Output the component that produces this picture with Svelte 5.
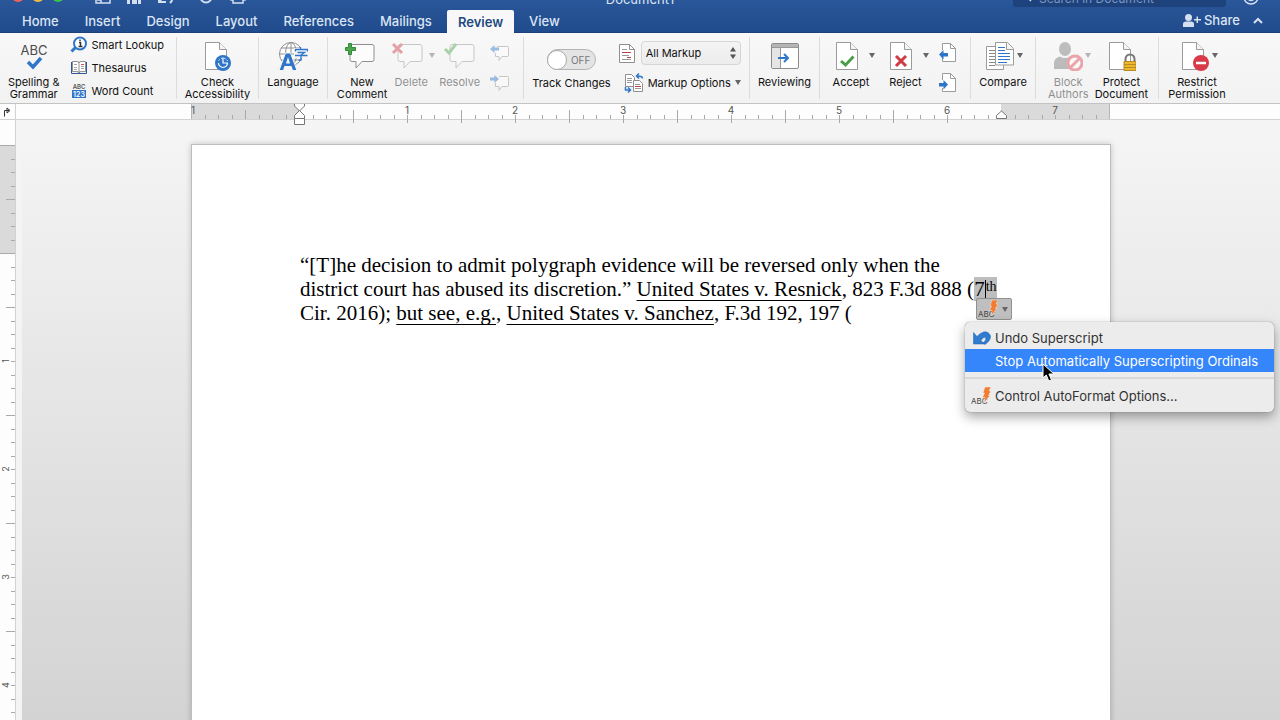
<script lang="ts">
	const tabs = ['Home', 'Insert', 'Design', 'Layout', 'References', 'Mailings', 'Review', 'View'];
	let activeTab = $state('Review');
	let search = $state('');
	let tracking = $state(false);
	let markup = $state('All Markup');

	// one inch on the rulers, with a tick every eighth
	const inch = 108;
	const hTicks = Array.from({ length: 67 }, (_, i) => i + 1);
	const vTicks = Array.from({ length: 87 }, (_, i) => i + 1);
	const hNumbers = [1, 2, 3, 4, 5, 6, 7];
	const vNumbers = [1, 2, 3, 4, 5, 6, 7, 8, 9];
</script>

{#snippet sheet()}
	<path d="M3.5 1.5h14l7 7v20h-21z" fill="#fff" stroke="#9b9b9b" />
	<path d="M17.5 1.5v7h7" fill="#f4f4f4" stroke="#9b9b9b" />
{/snippet}

{#snippet bubble()}
	<path d="M7 3.500h20a2 2 0 0 1 2 2v13a2 2 0 0 1-2 2H17l-6 6.500v-6.500H7a2 2 0 0 1-2-2v-13a2 2 0 0 1 2-2z" fill="#fcfcfc" stroke="#8f8f8f" />
{/snippet}

{#snippet caret()}
	<svg width="6" height="5" viewBox="0 0 6 5"><path d="M0 0h6L3 5z" fill="#666" /></svg>
{/snippet}

{#snippet abcBolt()}
	<svg width="20" height="18" viewBox="0 0 20 18">
		<text x="0" y="17" font-size="8" fill="#444">ABC</text>
		<path d="M14 0h6l-2 4h2l-2.500 4.500H19L13 16l1-5.500h-2.500l2-4.500H12z" fill="#f47b30" stroke="#ececec" stroke-width=".5" />
	</svg>
{/snippet}

<div class="app">
	<header>
		<div class="titlebar">
			<div class="title-left">
				<button class="light red" aria-label="Close"></button>
				<button class="light yellow" aria-label="Minimize"></button>
				<button class="light green" aria-label="Zoom"></button>
				<div class="quick">
					<button aria-label="Sidebar">
						<svg width="16" height="16" viewBox="0 0 16 16" fill="none" stroke="#d3def0" stroke-width="1.500"><path d="M1 2h14v13H1zM6 2v13M2 12h4" /></svg>
					</button>
					<button aria-label="Save">
						<svg width="16" height="16" viewBox="0 0 16 16"><path d="M1 1h12l2 2v13H1z" fill="#d3def0" /><path d="M4 11h8v5H4z" fill="#28528f" /><path d="M6 12h5v4H6z" fill="#d3def0" /></svg>
					</button>
					<button aria-label="Undo">
						<svg width="18" height="16" viewBox="0 0 18 16" fill="none" stroke="#d3def0" stroke-width="2"><path d="M2 7v7h7M3 13c4-7 12-6 12-1 0 1-1 2-2 3" /></svg>
					</button>
					<button class="redo" aria-label="Repeat">
						<svg width="16" height="16" viewBox="0 0 16 16" fill="none" stroke="#d3def0" stroke-width="2"><circle cx="8" cy="9" r="5.500" /></svg>
					</button>
					<button aria-label="Print">
						<svg width="18" height="16" viewBox="0 0 18 16" fill="none" stroke="#d3def0" stroke-width="1.500"><path d="M4 12H2V6h14v6h-2M4 10h10v5H4z" /></svg>
					</button>
				</div>
			</div>
			<div class="title">Document1</div>
			<div class="title-right">
				<label class="search">
					<svg width="8" height="12" viewBox="0 0 8 12" fill="none" stroke="#d3def0" stroke-width="1.500"><path d="M6 1L2 5l4 4" /></svg>
					<input type="text" bind:value={search} placeholder="Search in Document" aria-label="Search in Document" />
				</label>
				<button class="smile" aria-label="Feedback">
					<svg width="16" height="16" viewBox="0 0 16 16" fill="none" stroke="#d3def0" stroke-width="1.500"><circle cx="8" cy="8" r="7" /><path d="M5 10q3 3 6 0" /></svg>
				</button>
			</div>
		</div>

		<nav class="tabs">
			{#each tabs as tab}
				<button class="tab" class:active={tab === activeTab} onclick={() => (activeTab = tab)}>{tab}</button>
			{/each}
			<button class="share">
				<svg width="18" height="13" viewBox="0 0 18 13" fill="#d5e0f1"><circle cx="5.500" cy="3.500" r="3.500" /><path d="M0 13V10q0-2.500 3-2.500h5q3 0 3 2.500v3zM11 5h2.500V2.500h1.500V5h3v1.500h-3V9h-1.500V6.500H11z" /></svg>
				Share
			</button>
			<button class="collapse" aria-label="Collapse ribbon">
				<svg width="10" height="7" viewBox="0 0 10 7" fill="none" stroke="#d5e0f1" stroke-width="2"><path d="M1 6l4-4 4 4" /></svg>
			</button>
		</nav>
	</header>

	<div class="ribbon">
		<section class="group proofing">
			<button class="big">
				<svg width="30" height="30" viewBox="0 0 30 30">
					<text x="15" y="14" text-anchor="middle" font-size="13" fill="#4b4b4b">ABC</text>
					<path d="M9 21l5 5 8-9" fill="none" stroke="#2f76c8" stroke-width="3.500" />
				</svg>
				<span>Spelling &amp;<br />Grammar</span>
			</button>
			<div class="rows">
				<button class="small">
					<svg width="18" height="17" viewBox="0 0 18 17">
						<path d="M1.500 15.500L6 11" stroke="#2f76c8" stroke-width="3" />
						<circle cx="10" cy="7.500" r="6" fill="#fff" stroke="#2f76c8" stroke-width="2" />
						<path d="M9 6.500h1.500v4M8.500 10.500h4M10 3.500v1.500" stroke="#333" stroke-width="1.500" fill="none" />
					</svg>
					Smart Lookup
				</button>
				<button class="small">
					<svg width="18" height="15" viewBox="0 0 18 15">
						<path d="M1.500 2v11.500h15V2" fill="none" stroke="#2d5796" />
						<path d="M2.500 1.500H7q2 0 2 1.500 0-1.500 2-1.500h4.500v10H11q-2 0-2 1.500 0-1.500-2-1.500H2.500zM9 3v10" fill="#fff" stroke="#777" stroke-width=".8" />
						<path d="M4 4.500h3M4 7.500h3M4 9.500h3M11 6.500h3M11 8.500h3" stroke="#aaa" /><path d="M11 4.500h3" stroke="#d05050" />
					</svg>
					Thesaurus
				</button>
				<button class="small">
					<svg width="18" height="15" viewBox="0 0 18 15">
						<text x="9" y="6" text-anchor="middle" font-size="6" font-weight="600" fill="#555">ABC</text>
						<path d="M2 7h14v8H2z" fill="#2f76c8" />
						<text x="9" y="14" text-anchor="middle" font-size="7" font-weight="600" fill="#fff">123</text>
					</svg>
					Word Count
				</button>
			</div>
		</section>

		<section class="group check">
			<button class="big">
				<svg width="30" height="30" viewBox="0 0 30 30">
					{@render sheet()}
					<circle cx="21" cy="22" r="8" fill="#2f76c8" />
					<path d="M16.500 22a4.500 4.500 0 1 0 9 0M21 16.500V22h5" fill="none" stroke="#fff" stroke-width="1.200" />
					<path d="M25.500 20a5 5 0 0 0-9 0" fill="none" stroke="#fff" stroke-dasharray="1.500 1.500" />
				</svg>
				<span>Check<br />Accessibility</span>
			</button>
		</section>

		<section class="group language">
			<button class="big">
				<svg width="30" height="30" viewBox="0 0 30 30">
					<g fill="none" stroke="#8f8f8f"><circle cx="13" cy="13" r="11.500" fill="#fff" /><ellipse cx="13" cy="13" rx="5.500" ry="11.500" /><path d="M1.500 13h23M13 1.500v23M3 7h20M3 19h20" /></g>
					<path d="M16 7h14v10H16z" fill="#f5f5f5" />
					<path d="M22.500 6v2.500M17.500 10.500v-2h12v2M19.500 11.500h7l-3.500 2.500v5h-2.500M17 14.500h12.500" fill="none" stroke="#2f76c8" stroke-width="1.300" />
					<path d="M1 29.500L7.500 12h5L19 29.500h-4.500l-1.200-4H6.700l-1.200 4z" fill="#2f76c8" stroke="#f5f5f5" />
					<path d="M8 22.500l2-6.500 2 6.500z" fill="#f5f5f5" />
				</svg>
				<span>Language</span>
			</button>
		</section>

		<section class="group comments">
			<button class="big">
				<svg width="34" height="30" viewBox="0 0 34 30">
					{@render bubble()}
					<path d="M3.500 2.500h3v4h4v3h-4v4h-3v-4h-3v-3h3z" fill="#4da64d" stroke="#2f8a3b" />
				</svg>
				<span>New<br />Comment</span>
			</button>
			<button class="big off" disabled>
				<svg class="lead" width="34" height="30" viewBox="-2 0 34 30">
					{@render bubble()}
					<path d="M0 3l9 9M9 3l-9 9" stroke="#cf3a45" stroke-width="3" />
				</svg>
				<span>Delete</span>
			</button>
			<button class="drop off" disabled aria-label="Delete options">{@render caret()}</button>
			<button class="big off" disabled>
				<svg width="34" height="30" viewBox="-2 0 34 30">
					{@render bubble()}
					<path d="M0 8l4 4 7-9" fill="none" stroke="#4da64d" stroke-width="3" />
				</svg>
				<span>Resolve</span>
			</button>
			<div class="pair">
				<button class="off" disabled aria-label="Previous comment">
					<svg width="20" height="18" viewBox="0 0 20 18">
						<path d="M7 2.500h10.500a1 1 0 0 1 1 1v8a1 1 0 0 1-1 1H12l-3 4v-4H5.500V9" fill="#fff" stroke="#8f8f8f" />
						<path d="M0 5l4.500-4v2.500H9v3H4.500V9z" fill="#2f76c8" />
					</svg>
				</button>
				<button class="off" disabled aria-label="Next comment">
					<svg width="20" height="18" viewBox="0 0 20 18">
						<path d="M9 2.500h8.500a1 1 0 0 1 1 1v8a1 1 0 0 1-1 1H12l-3 4v-4H5.500V9" fill="#fff" stroke="#8f8f8f" />
						<path d="M9 5L4.500 1v2.500H0v3h4.500V9z" fill="#2f76c8" />
					</svg>
				</button>
			</div>
		</section>

		<section class="group tracking">
			<label class="track">
				<input type="checkbox" bind:checked={tracking} />
				<span class="switch"><i></i>{tracking ? 'ON' : 'OFF'}</span>
				Track Changes
			</label>
			<div class="markup">
				<div class="line">
					<svg width="16" height="19" viewBox="0 0 16 19">
						<path d="M.5.500h10l5 5v13H.5z" fill="#fff" stroke="#8f8f8f" /><path d="M10.500.500v5h5" fill="none" stroke="#8f8f8f" />
						<path d="M3 5.500h5M3 11.500h7M3 15.500h9" stroke="#999" /><path d="M3 8.500h9M8 13.500h4" stroke="#b8434f" />
					</svg>
					<span class="select">
						<select bind:value={markup} aria-label="Display for review">
							<option>All Markup</option>
							<option>Simple Markup</option>
							<option>No Markup</option>
							<option>Original</option>
						</select>
						<svg width="6" height="12" viewBox="0 0 6 12" fill="#555"><path d="M0 4.500L3 0l3 4.500zM0 7.500h6L3 12z" /></svg>
					</span>
				</div>
				<button class="small options">
					<svg width="20" height="20" viewBox="0 0 20 20">
						<path d="M1.500 1.500h6l3 3v9h-9z" fill="#fff" stroke="#8f8f8f" /><path d="M3 5.500h5M3 7.500h5M3 9.500h5" stroke="#999" />
						<path d="M9.500 7.500h6l3 3v8h-9z" fill="#fff" stroke="#8f8f8f" /><path d="M11 11.500h5M11 15.500h6" stroke="#999" /><path d="M11 13.500h6" stroke="#b8434f" />
						<path d="M18.500 5.500q0-2.500-5-2.500M15 .5L12.500 3 15 5.500M1.500 14v3H6M4 14.500L6.500 17 4 19.500" fill="none" stroke="#2f76c8" stroke-width="1.500" />
					</svg>
					Markup Options
					{@render caret()}
				</button>
			</div>
		</section>

		<section class="group reviewing">
			<button class="big">
				<svg width="30" height="30" viewBox="0 0 30 30">
					<rect x="1.500" y="2.500" width="27" height="25" rx="1.500" fill="#fff" stroke="#8c8c8c" />
					<path d="M2 7h8.500v20H2z" fill="#e5e5e5" /><path d="M2 3h26v3H2z" fill="#b5b5b5" /><path d="M2 6.500h26M10.500 7v20" stroke="#999" />
					<path d="M8 17h9M14 13l4 4-4 4" fill="none" stroke="#2f76c8" stroke-width="2" />
				</svg>
				<span>Reviewing</span>
			</button>
		</section>

		<section class="group changes">
			<button class="big">
				<svg class="lead" width="30" height="30" viewBox="0 0 30 30">
					{@render sheet()}
					<path d="M8 20l4.500 4 8-8.500" fill="none" stroke="#4a9d4a" stroke-width="3" />
				</svg>
				<span>Accept</span>
			</button>
			<button class="drop" aria-label="Accept options">{@render caret()}</button>
			<button class="big">
				<svg class="lead" width="30" height="30" viewBox="0 0 30 30">
					{@render sheet()}
					<path d="M9 15l10 10M19 15L9 25" stroke="#cf3a45" stroke-width="3" />
				</svg>
				<span>Reject</span>
			</button>
			<button class="drop" aria-label="Reject options">{@render caret()}</button>
			<div class="pair">
				<button aria-label="Previous change">
					<svg width="18" height="20" viewBox="0 0 18 20">
						<path d="M3.500 7V.500h8l5 5v13h-13V15" fill="#fff" stroke="#9b9b9b" /><path d="M11.500.500v5h5" fill="none" stroke="#9b9b9b" />
						<path d="M0 11.500L4.500 7v3H9v3.500H4.500v3z" fill="#2f76c8" />
					</svg>
				</button>
				<button aria-label="Next change">
					<svg width="18" height="20" viewBox="0 0 18 20">
						<path d="M3.500 7V.500h8l5 5v13h-13V15" fill="#fff" stroke="#9b9b9b" /><path d="M11.500.500v5h5" fill="none" stroke="#9b9b9b" />
						<path d="M9 11.500L4.500 7v3H0v3.500h4.500v3z" fill="#2f76c8" />
					</svg>
				</button>
			</div>
		</section>

		<section class="group compare">
			<button class="big">
				<svg class="lead" width="30" height="30" viewBox="0 0 30 30">
					<path d="M1.500 5.500h17v23h-17z" fill="#fff" stroke="#9b9b9b" />
					<path d="M4 9.500h6M4 12.500h6M4 15.500h6M4 18.500h6M4 21.500h6M4 24.500h6" stroke="#888" />
					<path d="M10.500 1.500h12l6 6v16.500h-18z" fill="#fff" stroke="#9b9b9b" /><path d="M21.500 1.500v7h7" fill="#f4f4f4" stroke="#9b9b9b" />
					<path d="M13 6.500h7M13 9.500h7M13 12.500h12M13 15.500h12M13 18.500h12M13 21.500h9" stroke="#2f76c8" />
				</svg>
				<span>Compare</span>
			</button>
			<button class="drop" aria-label="Compare options">{@render caret()}</button>
		</section>

		<section class="group protect">
			<button class="big off" disabled>
				<svg width="30" height="30" viewBox="0 0 30 30">
					<ellipse cx="12" cy="8" rx="6" ry="7" fill="#777" />
					<path d="M1 28v-6q0-5 6-6.500 5 3 10 0 5 1 5 6.500v6z" fill="#777" />
					<circle cx="22" cy="22" r="7" fill="#fff" stroke="#dc4550" stroke-width="3" /><path d="M17 27l10-10" stroke="#dc4550" stroke-width="3" />
				</svg>
				<span>Block<br />Authors</span>
			</button>
			<button class="drop off" disabled aria-label="Block Authors options">{@render caret()}</button>
			<button class="big">
				<svg width="30" height="30" viewBox="0 0 30 30">
					{@render sheet()}
					<path d="M19.500 21v-3a4.500 4.500 0 0 1 9 0v3" fill="none" stroke="#777" stroke-width="2" />
					<path d="M18 20.500h12v9H18z" fill="#edb72f" stroke="#b78a20" /><path d="M18 23.500h12M18 26.500h12" stroke="#b78a20" />
				</svg>
				<span>Protect<br />Document</span>
			</button>
		</section>

		<section class="group restrict">
			<button class="big">
				<svg class="lead" width="30" height="30" viewBox="0 0 30 30">
					{@render sheet()}
					<circle cx="22" cy="22" r="8" fill="#d93a47" /><path d="M17 22h10" stroke="#fff" stroke-width="2.500" />
				</svg>
				<span>Restrict<br />Permission</span>
			</button>
			<button class="drop" aria-label="Restrict Permission options">{@render caret()}</button>
		</section>
	</div>

	<div class="workspace">
		<div class="corner">
			<svg width="8" height="10" viewBox="0 0 8 10" fill="none" stroke="#333"><path d="M1.500 9.500V3.500H6M4 1l3 2.500L4 6z" /></svg>
		</div>

		<div class="hruler">
			<svg width="920" height="21" viewBox="0 0 920 21">
				<path d="M0 0h108v15H0zM810 0h109v15H810z" fill="#dadada" />
				<path d="M.5 0v15M918.500 0v15" stroke="#b5b5b5" />
				{#each hTicks as i}
					{@const x = Math.round((i * inch) / 8) + 0.5}
					<path d={i % 8 === 4 ? `M${x} 6v9` : `M${x} 11v4`} stroke="#a9a9a9" />
					{#if i % 4 === 0 && i > 8 && i < 60}
						<path d={`M${x} 15v4`} stroke="#a9a9a9" />
					{/if}
				{/each}
				<text x="0" y="10" font-size="10" fill="#4d5a70">1</text>
				{#each hNumbers as n}
					<text x={(n + 1) * inch} y="10" text-anchor="middle" font-size="10" fill="#555">{n}</text>
				{/each}
				<g fill="#fff" stroke="#777">
					<path d="M103.500 0v2l5 5 5-5V0M103.500 14.500v-3l5-5 5 5v3zM103.500 14.500h10v6h-10z" />
					<path d="M805.500 14.500v-3l5-4.500 5 4.500v3z" />
				</g>
			</svg>
		</div>

		<div class="vruler">
			<svg width="15" height="1200" viewBox="0 0 15 1200">
				<path d="M0 25h15v109H0z" fill="#dadada" />
				<path d="M0 25.500h15M0 133.500h15" stroke="#aaa" />
				{#each vTicks as i}
					{@const y = Math.round(25 + (i * inch) / 8) + 0.5}
					<path d={i % 8 === 4 ? `M6 ${y}h9` : `M11 ${y}h4`} stroke="#a9a9a9" />
				{/each}
				{#each vNumbers as n}
					<text transform={`translate(9 ${133 + n * inch}) rotate(-90)`} text-anchor="middle" font-size="9" fill="#555">{n}</text>
				{/each}
			</svg>
		</div>

		<main class="canvas">
			<article class="page">
				<p>
					“[T]he decision to admit polygraph evidence will be reversed only when the district court has abused its discretion.” <u>United States v. Resnick</u>, 823 F.3d 888 (<mark>7<span class="insertion"></span><sup>th</sup></mark>
					Cir. 2016); <u>but see, e.g.</u>, <u>United States v. Sanchez</u>, F.3d 192, 197 (
				</p>

				<div class="autocorrect">
					<button class="smart-tag" aria-label="AutoCorrect options">{@render abcBolt()}{@render caret()}</button>
					<div class="menu" role="menu">
						<button role="menuitem">
							<svg class="undo" width="18" height="14" viewBox="0 0 18 14">
								<path d="M.5 1.500v11.500h11L8 9.500Q10.500 5.500 12.500 6.500q1.500 2-2.500 5.500l2 1.500Q18 9.500 17.500 5 15.500 0 10.500 1 7 2 4 5.500z" fill="#2f7bd0" stroke="#2262ad" stroke-width=".5" />
							</svg>
							Undo Superscript
						</button>
						<button role="menuitem" class="selected">Stop Automatically Superscripting Ordinals</button>
						<hr />
						<button role="menuitem"><span class="menu-icon">{@render abcBolt()}</span>Control AutoFormat Options...</button>
						<svg class="pointer" width="13" height="19" viewBox="0 0 13 19">
							<path d="M1 1v14l3.300-3 2.500 6 2.700-1.200-2.600-5.800H12z" fill="#000" stroke="#fff" />
						</svg>
					</div>
				</div>
			</article>
		</main>
	</div>
</div>

<style>
	:global(body) {
		margin: 0;
	}

	.app {
		display: flex;
		flex-direction: column;
		height: 100vh;
		overflow: hidden;
		font-family: Inter, 'Liberation Sans', sans-serif;
		font-size: 11px;
		color: #111;
	}

	button {
		padding: 0;
		border: none;
		background: none;
		font: inherit;
		color: inherit;
	}

	svg {
		display: block;
		flex: none;
	}

	header {
		background: linear-gradient(#2a579a, #204b8c);
		border-bottom: 1px solid #1d4279;
		color: #dbe5f4;
	}

	/* the window sits partly above the top edge, so the title bar shows only its lower part */
	.titlebar {
		display: grid;
		grid-template: 10px / 1fr auto 1fr;
		align-items: end;
		height: 10px;
		overflow: hidden;
	}

	.title-left,
	.quick,
	.title-right {
		display: flex;
		align-items: flex-end;
	}

	.title-left {
		gap: 8px;
		padding: 0 0 6px 12px;
	}

	.light {
		width: 12px;
		height: 12px;
		margin-bottom: 2px;
		border-radius: 50%;
	}

	.red {
		background: #f4605a;
	}

	.yellow {
		background: #f5bd3f;
	}

	.green {
		background: #3cc648;
	}

	.quick {
		gap: 15px;
		margin-left: 23px;
	}

	.redo {
		margin-left: 8px;
	}

	.title {
		padding-bottom: 3px;
		font-size: 13px;
		line-height: 16px;
	}

	.title-right {
		justify-content: flex-end;
		gap: 17px;
		padding-right: 21px;
	}

	.search {
		display: flex;
		align-items: center;
		gap: 6px;
		box-sizing: border-box;
		width: 213px;
		height: 18px;
		margin-bottom: 3px;
		padding-left: 12px;
		background: #1d427c;
		border-radius: 3px;
	}

	.search input {
		flex: 1;
		min-width: 0;
		padding: 0;
		border: none;
		outline: none;
		background: none;
		font: inherit;
		font-size: 12px;
		color: #fff;
	}

	.search input::placeholder {
		color: #7d97c0;
	}

	.smile {
		margin-bottom: 5px;
	}

	.tabs {
		display: flex;
		align-items: stretch;
		gap: 4px;
		height: 22px;
		padding: 0 17px 0 11px;
	}

	.tab {
		padding: 0 11px;
		border-radius: 2px 2px 0 0;
		font-size: 13px;
		font-weight: 500;
	}

	.tab.active {
		margin-bottom: -1px;
		background: #f8f8f8;
		color: #23497f;
		font-weight: 600;
	}

	.share {
		display: flex;
		align-items: center;
		gap: 3px;
		margin-left: auto;
		padding-bottom: 2px;
		font-size: 13px;
		font-weight: 500;
	}

	.collapse {
		margin-left: 9px;
		padding-bottom: 2px;
	}

	.ribbon {
		display: flex;
		height: 70px;
		background: linear-gradient(#f8f8f8, #f2f2f2);
		border-bottom: 1px solid #c3c3c3;
	}

	.group {
		display: flex;
		flex: none;
		justify-content: center;
		box-sizing: border-box;
		height: 62px;
		margin-top: 4px;
		border-right: 1px solid #dcdcdc;
	}

	.group:last-child {
		border-right: none;
	}

	.big {
		display: flex;
		flex-direction: column;
		align-items: center;
		gap: 1px;
		padding-top: 4px;
		line-height: 12px;
		text-align: center;
	}

	.big span {
		padding-top: 4px;
	}

	.lead {
		margin-right: 6px;
	}

	.off {
		color: #111;
		opacity: 0.45;
	}

	.drop {
		align-self: flex-start;
		width: 6px;
		height: 36px;
		display: flex;
		align-items: center;
	}

	.small {
		display: flex;
		align-items: center;
		gap: 4px;
		height: 23px;
	}

	.proofing {
		width: 177px;
		gap: 10px;
		padding-right: 4px;
	}

	.rows {
		margin-top: -4px;
	}

	.check {
		width: 82px;
	}

	.language {
		width: 69px;
	}

	.comments {
		width: 196px;
		gap: 4px;
		padding-right: 4px;
	}

	.pair {
		display: flex;
		flex-direction: column;
		gap: 10px;
		padding-top: 6px;
	}

	.pair button {
		height: 20px;
	}

	.comments .drop {
		margin-left: -6px;
	}

	.comments .pair {
		margin-left: 6px;
	}

	.tracking {
		width: 226px;
		gap: 8px;
	}

	.track {
		display: flex;
		flex-direction: column;
		align-items: center;
		gap: 6px;
		padding-top: 12px;
		line-height: 14px;
	}

	.track input {
		position: absolute;
		opacity: 0;
	}

	.switch {
		display: flex;
		align-items: center;
		gap: 4px;
		box-sizing: border-box;
		width: 49px;
		height: 21px;
		border: 1px solid #b3b3b3;
		border-radius: 11px;
		background: #e4e4e4;
		font-size: 10px;
		color: #777;
	}

	.switch i {
		box-sizing: border-box;
		width: 20px;
		height: 20px;
		margin-left: -1px;
		border: 1px solid #a8a8a8;
		border-radius: 50%;
		background: #fff;
	}

	.markup {
		display: flex;
		flex-direction: column;
		gap: 6px;
		padding-top: 4px;
	}

	.line {
		display: flex;
		align-items: center;
		gap: 6px;
	}

	.select {
		display: flex;
		align-items: center;
		box-sizing: border-box;
		width: 100px;
		height: 24px;
		padding: 0 4px;
		border: 1px solid #d6d6d6;
		border-radius: 4px;
		background: linear-gradient(#f4f4f4, #ececec);
	}

	.select select {
		flex: 1;
		min-width: 0;
		padding: 0;
		border: none;
		appearance: none;
		background: none;
		font: inherit;
		color: inherit;
	}

	.options {
		padding-left: 5px;
	}

	.reviewing {
		width: 70px;
	}

	.changes {
		width: 151px;
	}

	.changes .drop + .big {
		margin-left: 12px;
	}

	.changes .pair {
		margin-left: 10px;
	}

	.compare {
		width: 65px;
		padding-right: 4px;
	}

	.compare .drop {
		margin-left: -10px;
	}

	.protect {
		width: 123px;
		padding-left: 2px;
	}

	.protect .drop {
		margin: 0 4px 0 -4px;
	}

	.restrict {
		width: 72px;
		padding-right: 4px;
	}

	.restrict .drop {
		margin-left: -14px;
	}

	.workspace {
		display: grid;
		grid-template: 16px minmax(0, 1fr) / 16px minmax(0, 1fr);
		flex: 1;
		min-height: 0;
	}

	.corner,
	.hruler {
		background: #fdfdfd;
		border-bottom: 1px solid #d2d2d2;
	}

	.corner {
		display: flex;
		align-items: center;
		padding-left: 3px;
		border-right: 1px solid #d2d2d2;
	}

	.hruler {
		position: relative;
		z-index: 1;
		display: flex;
		justify-content: center;
		padding-left: 6px;
	}

	.vruler {
		overflow: hidden;
		background: #fdfdfd;
		border-right: 1px solid #d2d2d2;
	}

	.canvas {
		display: flex;
		justify-content: center;
		overflow: hidden;
		padding-top: 24px;
		border-left: 6px solid #f4f4f4;
		background: linear-gradient(#f5f5f5, #d3d3d3);
	}

	.page {
		position: relative;
		box-sizing: border-box;
		width: 920px;
		height: 1188px;
		flex: none;
		padding: 108px;
		border: 1px solid #bdbdbd;
		background: #fff;
		box-shadow: 0 0 6px rgba(0, 0, 0, 0.2);
	}

	.page p {
		margin: 0;
		font-family: 'Liberation Serif', serif;
		font-size: 21px;
		line-height: 24px;
		color: #000;
	}

	u {
		text-decoration-thickness: 1px;
		text-underline-offset: 4px;
		text-decoration-skip-ink: none;
	}

	mark {
		background: #bdbdbd;
		color: inherit;
	}

	sup {
		font-size: 14px;
		line-height: 0;
		vertical-align: 5px;
	}

	.insertion {
		display: inline-block;
		width: 1px;
		height: 20px;
		background: #000;
		vertical-align: -4px;
	}

	.autocorrect {
		position: absolute;
		top: 153px;
		left: 784px;
	}

	.smart-tag {
		display: flex;
		align-items: center;
		gap: 4px;
		box-sizing: border-box;
		width: 36px;
		height: 22px;
		padding-left: 1px;
		border: 1px solid #909090;
		border-radius: 2px;
		background: #bfbfbf;
	}

	.menu {
		position: absolute;
		top: 24px;
		left: -11px;
		box-sizing: border-box;
		width: max-content;
		min-width: 309px;
		padding: 4px 0 5px;
		border-radius: 5px;
		background: #ececec;
		box-shadow: 0 0 1px rgba(0, 0, 0, 0.6), 0 5px 12px rgba(0, 0, 0, 0.35);
		font-size: 13px;
		color: #333;
	}

	.menu button {
		display: flex;
		align-items: center;
		width: 100%;
		height: 23px;
		padding: 0 16px 0 30px;
		white-space: nowrap;
	}

	.menu .selected {
		background: #3586fb;
		color: #fff;
	}

	.menu hr {
		height: 2px;
		margin: 5px 0;
		border: none;
		background: #d8d8d8;
	}

	.undo {
		margin: 0 4px 0 -22px;
	}

	.menu-icon {
		margin: 0 4px 0 -24px;
	}

	.pointer {
		position: absolute;
		top: 41px;
		left: 77px;
	}
</style>
